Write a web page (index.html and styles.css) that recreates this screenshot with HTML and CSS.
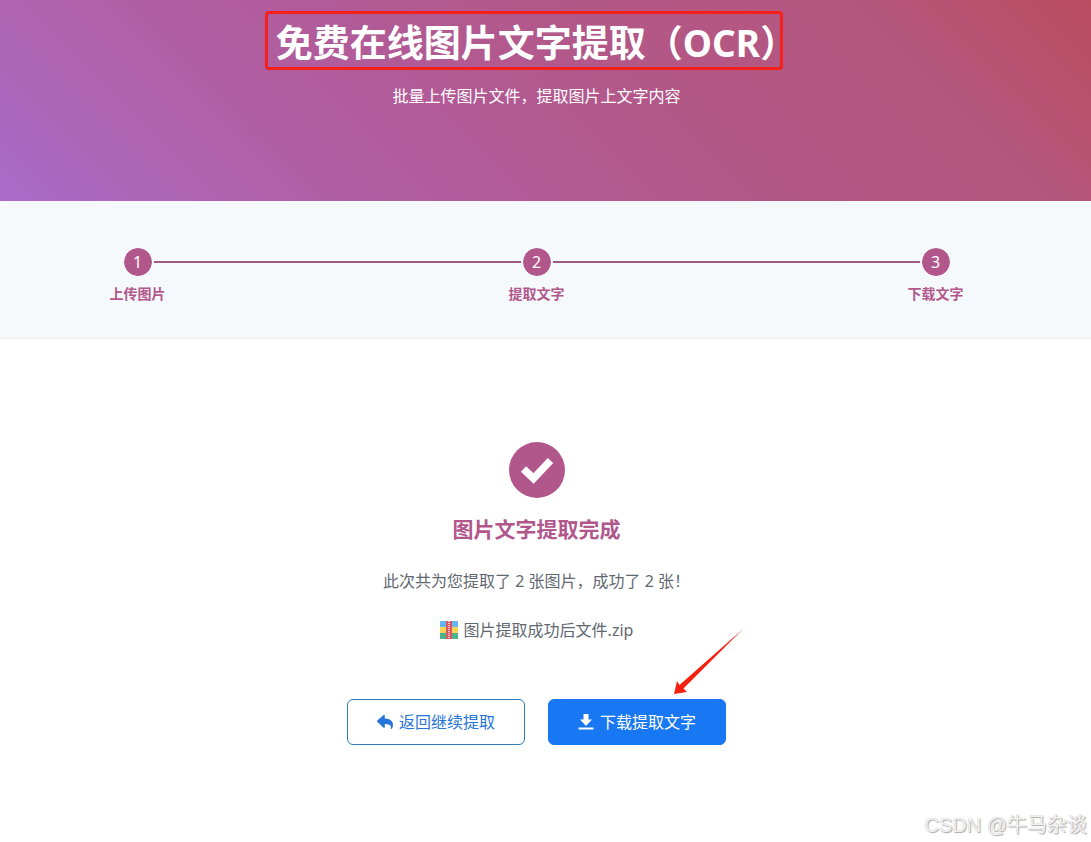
FILE: index.html
```html
<!DOCTYPE html>
<html lang="zh-CN">
<head>
  <meta charset="UTF-8">
  <meta name="viewport" content="width=device-width, initial-scale=1">
  <title>免费在线图片文字提取（OCR）</title>
  <link rel="stylesheet" href="styles.css">
</head>
<body>
  <header class="hero">
    <h1 class="hero-title">免费在线图片文字提取（OCR）</h1>
    <p class="hero-desc">批量上传图片文件，提取图片上文字内容</p>
  </header>

  <section class="progress">
    <ol class="steps">
      <li class="step"><span class="step-num">1</span><span class="step-label">上传图片</span></li>
      <li class="step"><span class="step-num">2</span><span class="step-label">提取文字</span></li>
      <li class="step"><span class="step-num">3</span><span class="step-label">下载文字</span></li>
    </ol>
  </section>

  <main class="result">
    <svg class="result-icon" viewBox="0 0 56 56" aria-hidden="true">
      <circle cx="28" cy="28" r="28" fill="#b1578c"/>
      <path d="M14.500 27L24.500 36.500L41.500 18.500" fill="none" stroke="#fff" stroke-width="7.500"/>
    </svg>
    <h2 class="result-title">图片文字提取完成</h2>
    <p class="result-text">此次共为您提取了 2 张图片，成功了 2 张！</p>
    <p class="result-file">
      <svg class="file-icon" viewBox="0 0 18 18" aria-hidden="true">
        <path fill="#63b8f2" d="M0 0h18v6H0z"/>
        <path fill="#fcd354" d="M0 6h18v6H0z"/>
        <path fill="#4db38a" d="M0 12h18v6H0z"/>
        <path fill="#d95663" d="M6 0h6v18H6z"/>
        <path stroke="#f6c9cc" stroke-width="2" stroke-dasharray="1 1" d="M9 0v18"/>
      </svg>
      <span>图片提取成功后文件.zip</span>
    </p>

    <div class="actions">
      <button type="button" class="btn btn-outline">
        <svg class="btn-icon" viewBox="0 0 16 16" aria-hidden="true">
          <path fill="currentColor" d="M.3 6.400L6.600 1c.5-.4 1.200 0 1.200.6v2.900c5.200.2 8.200 2.600 8.200 6.200 0 1.800-.5 3.200-1.500 4.300-.3.3-.8 0-.7-.4.9-3.600-1.700-4.500-6-4.600v3.200c0 .6-.7.9-1.200.5L.3 7.700a.9.9 0 0 1 0-1.300z"/>
        </svg>
        <span>返回继续提取</span>
      </button>
      <button type="button" class="btn btn-primary">
        <svg class="btn-icon" viewBox="0 0 16 16" aria-hidden="true">
          <path fill="currentColor" d="M5.500 0h5v5.500H14L8 12 2 5.500h3.500zM.5 13.500h15v2H.5z"/>
        </svg>
        <span>下载提取文字</span>
      </button>
      <svg class="pointer" viewBox="0 0 70 66" aria-hidden="true">
        <path fill="#f5200f" d="M69 0L9.500 59.500 13 63 0 65 3 52l2.500 4z"/>
      </svg>
    </div>
  </main>

  <div class="watermark">CSDN @牛马杂谈</div>
</body>
</html>
```

FILE: styles.css
```css
:root {
  --accent: #b1578c;
  --blue: #1877f2;
  --gutter: 18px;
}

* {
  box-sizing: border-box;
}

body {
  position: relative;
  min-height: 100vh;
  margin: 0;
  background: #fff;
  color: #5f6871;
  font-family: "Noto Sans", "Noto Sans CJK SC", sans-serif;
  font-size: 16px;
  line-height: 24px;
}

h1, h2, p, ol {
  margin: 0;
  padding: 0;
}

.hero,
.progress,
.result {
  padding-right: var(--gutter);
  text-align: center;
}

.hero {
  padding-top: 20px;
  padding-bottom: 93px;
  background: linear-gradient(45deg, #a96bc8, #b060a6 24%, #b15a96 42%, #b35787 60%, #b4567c 82%, #ba4d60);
  color: #fff;
}

.hero-title {
  position: relative;
  display: inline-block;
  font-size: 37px;
  line-height: 46px;
}

/* highlight frame around the title */
.hero-title::after {
  content: "";
  position: absolute;
  inset: -9px 14px -4px -11px;
  border: 3px solid #f5201c;
  border-radius: 4px;
}

.hero-desc {
  margin-top: 18px;
}

.progress {
  padding-top: 45px;
  padding-bottom: 32px;
  background: #f5f9fc;
  border-bottom: 1px solid #edf0f2;
}

.steps {
  position: relative;
  display: flex;
  justify-content: space-between;
  max-width: 854px;
  margin: 0 auto;
  list-style: none;
}

.steps::before {
  content: "";
  position: absolute;
  top: 15px;
  left: 28px;
  right: 28px;
  height: 2px;
  background: #9c5a86;
}

.step {
  position: relative;
  display: flex;
  flex-direction: column;
  align-items: center;
}

.step-num {
  width: 32px;
  height: 32px;
  border: 2px solid #f5f9fc;
  border-radius: 50%;
  background: var(--accent);
  background-clip: padding-box;
  color: #fff;
  line-height: 28px;
}

.step-label {
  margin-top: 4px;
  color: var(--accent);
  font-size: 14px;
  font-weight: 600;
}

.result {
  display: flex;
  flex-direction: column;
  align-items: center;
  padding-top: 103px;
}

.result-icon {
  width: 56px;
  height: 56px;
}

.result-title {
  margin-top: 16px;
  color: var(--accent);
  font-size: 21px;
  line-height: 30px;
}

.result-text {
  margin-top: 25px;
}

.result-file {
  display: flex;
  align-items: center;
  gap: 6px;
  margin-top: 25px;
}

.file-icon {
  width: 18px;
  height: 18px;
}

.actions {
  position: relative;
  display: flex;
  gap: 23px;
  margin-top: 57px;
}

.btn {
  display: flex;
  align-items: center;
  justify-content: center;
  gap: 6px;
  padding: 10px 29px;
  border: 1px solid var(--blue);
  border-radius: 6px;
  font: inherit;
  cursor: pointer;
}

.btn-outline {
  border-color: #2f7cb8;
  background: #fff;
  color: #2674d9;
}

.btn-primary {
  background: var(--blue);
  color: #fff;
}

.btn-icon {
  width: 16px;
  height: 16px;
}

.pointer {
  position: absolute;
  right: -18px;
  bottom: 50px;
  width: 70px;
  height: 66px;
}

.watermark {
  position: absolute;
  right: 4px;
  bottom: 4px;
  color: #f2f2f2;
  font-family: "Liberation Sans", "Noto Sans CJK SC", sans-serif;
  font-size: 20px;
  line-height: 26px;
  text-shadow: 1px 1px 1px #aaa, 0 0 1px #bbb;
}
```
